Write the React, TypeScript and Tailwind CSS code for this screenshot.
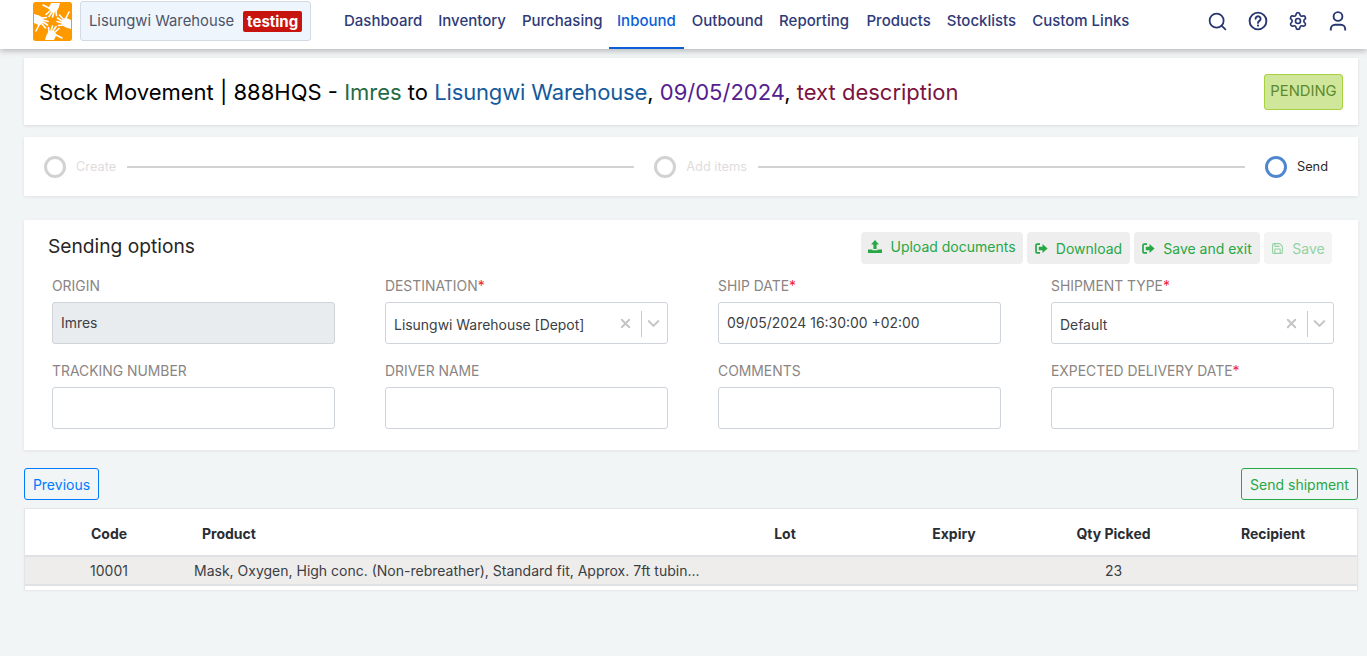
import React from "react";
import { Search, Settings, Save, X, ChevronDown } from "lucide-react";

const navItems = ["Dashboard", "Inventory", "Purchasing", "Inbound", "Outbound", "Reporting", "Products", "Stocklists", "Custom Links"];
const tableCols = "grid grid-cols-[168px_503px_178px_160px_159px_160px]";

function navClass(n: string) {
  if (n === "Inbound") return "text-[#0b5ed7] border-b-2 border-[#0b5ed7] -ml-[1.5px]";
  if (n === "Products") return "text-[#2f3a78] ml-[1.5px]";
  return "text-[#2f3a78]";
}

function Logo() {
  const hand = (
    <g>
      <path d="M18 1h9l-1.500 5-2 3.500-5 1-3-4z" fill="#fff" />
      <g stroke="#fff" strokeWidth="1.6" strokeLinecap="round" fill="none">
        <path d="M17 6.500l-7-3.500" />
        <path d="M17 9l-4 3.500" />
        <path d="M19 10l-3 4.500" />
        <path d="M21 10l-1.500 5" />
        <path d="M23 9l.5 4.500" />
      </g>
    </g>
  );
  return (
    <svg width="39" height="39" viewBox="0 0 39 39" className="rounded-[2px]">
      <rect width="39" height="39" rx="2" fill="#ff9900" />
      {hand}
      <g transform="rotate(90 19.5 19.5)">{hand}</g>
      <g transform="rotate(180 19.5 19.5)">{hand}</g>
      <g transform="rotate(270 19.5 19.5)">{hand}</g>
    </svg>
  );
}

function Arrow() {
  return (
    <svg width="13" height="11" viewBox="0 0 13 11" fill="none" className="shrink-0">
      <path d="M5 1.2H2a1 1 0 0 0-1 1v6.600a1 1 0 0 0 1 1h3" stroke="currentColor" strokeWidth="1.7" />
      <path d="M3.800 3.800H7.500V1L12.600 5.500 7.500 10V7.200H3.800z" fill="currentColor" />
    </svg>
  );
}

function UploadSolid() {
  return (
    <svg width="14" height="13" viewBox="0 0 14 13" className="shrink-0">
      <path d="M7 0l4 4.400H8.600V9H5.400V4.400H3z" fill="currentColor" />
      <path d="M0 9.500h4.400v.7h5.200v-.7H14V13H0z" fill="currentColor" />
    </svg>
  );
}

function HelpIcon() {
  return (
    <svg width="20" height="20" viewBox="0 0 20 20" fill="none" stroke="currentColor" strokeWidth="1.9">
      <circle cx="10" cy="10" r="8.400" />
      <path d="M7.600 7.800a2.500 2.500 0 1 1 3.800 2.100c-.9.6-1.400 1-1.400 2" strokeLinecap="round" />
      <circle cx="10" cy="14.600" r="1.100" fill="currentColor" stroke="none" />
    </svg>
  );
}

function UserIcon() {
  return (
    <svg width="20" height="20" viewBox="0 0 20 20" fill="none" stroke="currentColor" strokeWidth="1.9">
      <circle cx="10" cy="5.500" r="4.400" />
      <path d="M2.800 19.500v-1.500a4.300 4.300 0 0 1 4.300-4.300h5.800a4.300 4.300 0 0 1 4.300 4.300v1.500" />
    </svg>
  );
}

function Label({ text, req }: { text: string; req?: boolean }) {
  return (
    <div className="h-[20px] text-[13.9px] leading-[20px] text-[#8a8583] uppercase">
      {text}
      {req && <span className="text-[#f01f3e]">*</span>}
    </div>
  );
}

function Field({ label, req, value, disabled, select }: { label: string; req?: boolean; value?: string; disabled?: boolean; select?: boolean }) {
  return (
    <div className="w-[283px]">
      <Label text={label} req={req} />
      <div className={`mt-[6px] h-[42px] rounded-[3px] border border-[#ced4da] flex items-center text-[13.95px] text-[#3b3f46] pl-[8px] ${disabled ? "bg-[#e9ecef]" : "bg-white"}`}>
        <span className={`flex-1 ${select ? "pt-[4px]" : ""}`}>{value}</span>
        {select && (
          <div className="flex items-center text-[#c4c4c4] pt-[1px]">
            <X size={15} strokeWidth={3} className="mr-[8px]" />
            <div className="w-px h-[26px] bg-[#ccc]" />
            <ChevronDown size={19} strokeWidth={2.6} className="ml-[2px] mr-[4px]" />
          </div>
        )}
      </div>
    </div>
  );
}

function Step({ label, active }: { label: string; active?: boolean }) {
  return (
    <div className="flex items-center shrink-0">
      <div className={`w-[22px] h-[22px] rounded-full border-[3px] ${active ? "border-[#4f87cf]" : "border-[#d2d2d2]"}`} />
      <span className={`ml-[10px] text-[12.8px] ${active ? "text-[#2a2a2a]" : "text-[#e0dcdc]"}`}>{label}</span>
    </div>
  );
}

export default function App() {
  return (
    <div className="min-h-[656px] bg-[#f1f5f6] font-['Inter',sans-serif] overflow-hidden">
      <header className="h-[49px] bg-white flex shadow-[0_2px_6px_rgba(0,0,0,0.25)] relative pl-[33px]">
        <div className="mt-[2px]"><Logo /></div>
        <div className="ml-[8px] mt-[1px] h-[40px] w-[231px] bg-[#eff5fd] border border-[#d3d9e5] rounded-[3px] flex items-center pl-[8px]">
          <span className="text-[14.8px] text-[#4d5668]">Lisungwi Warehouse</span>
          <span className="ml-[9px] bg-[#c8140f] text-white font-bold text-[15px] leading-[21px] px-[4px] rounded-[2px]">testing</span>
        </div>
        <nav className="ml-[25px] flex">
          {navItems.map((n) => (
            <a key={n} className={`px-[8px] h-[49px] leading-[41px] text-[15px] font-medium ${navClass(n)}`}>{n}</a>
          ))}
        </nav>
        <div className="ml-auto mr-[19px] flex items-start gap-[20px] pt-[11px] text-[#283672]">
          <Search size={21} strokeWidth={2} />
          <HelpIcon />
          <Settings size={20} strokeWidth={2} />
          <UserIcon />
        </div>
      </header>

      <main className="pl-[24px] pr-[9px]">
        <section className="mt-[9px] h-[67px] bg-white shadow-[0_1px_3px_rgba(0,0,0,0.1)] flex items-center justify-between px-[15px]">
          <h1 className="text-[22px] text-black font-normal pt-[2px]">
            Stock Movement | 888HQS - <span className="text-[#1f6b46]">Imres</span> to <span className="text-[#155a9c] tracking-[-0.15px]">Lisungwi Warehouse</span>, <span className="text-[#53218f]">09/05/2024</span>, <span className="text-[#7b1440]">text description</span>
          </h1>
          <div className="h-[36px] w-[79px] bg-[#cfe69b] border border-[#a6d23f] rounded-[3px] text-[#5f8a2c] text-[14.8px] flex items-center justify-center">PENDING</div>
        </section>

        <section className="mt-[12px] h-[59px] bg-white shadow-[0_1px_3px_rgba(0,0,0,0.08)] flex items-center pl-[20px] pr-[30px]">
          <Step label="Create" />
          <div className="w-[507px] shrink-0 h-[2px] bg-[#d2d2d2] ml-[11px] mr-[20px]" />
          <Step label="Add items" />
          <div className="flex-1 h-[2px] bg-[#d2d2d2] ml-[11px] mr-[20px]" />
          <Step label="Send" active />
        </section>

        <section className="mt-[24px] h-[230px] bg-white shadow-[0_1px_3px_rgba(0,0,0,0.08)] pl-[28px] pr-[26px]">
          <div className="flex justify-between h-[56px]">
            <h2 className="-ml-[4px] mt-[14px] text-[19.2px] leading-[24px] text-[#262626] font-normal">Sending options</h2>
            <div className="flex gap-[4px] mt-[12px] text-[14px] text-[#28a745]">
              <button className="h-[32px] w-[162px] bg-[#eeeeee] rounded-[4px] flex items-center justify-center gap-[8px] pb-[4px]"><UploadSolid />Upload documents</button>
              <button className="h-[32px] w-[103px] bg-[#eeeeee] rounded-[4px] flex items-center justify-center gap-[8px]"><Arrow />Download</button>
              <button className="h-[32px] w-[126px] bg-[#eeeeee] rounded-[4px] flex items-center justify-center gap-[8px]"><Arrow />Save and exit</button>
              <button className="h-[32px] w-[68px] bg-[#f4f4f4] rounded-[4px] flex items-center justify-center gap-[8px] text-[#93d2a2]"><Save size={13} />Save</button>
            </div>
          </div>
          <div className="grid grid-cols-[283px_283px_283px_283px] gap-x-[50px] gap-y-[17px]">
            <Field label="Origin" value="Imres" disabled />
            <Field label="Destination" req value="Lisungwi Warehouse [Depot]" select />
            <Field label="Ship date" req value="09/05/2024 16:30:00 +02:00" />
            <Field label="Shipment type" req value="Default" select />
            <Field label="Tracking number" />
            <Field label="Driver name" />
            <Field label="Comments" />
            <Field label="Expected delivery date" req />
          </div>
        </section>

        <div className="mt-[18px] flex justify-between text-[14px]">
          <button className="h-[32px] w-[75px] border border-[#007bff] rounded-[3px] text-[#007bff]">Previous</button>
          <button className="h-[32px] w-[117px] border border-[#28a745] rounded-[3px] text-[#28a745]">Send shipment</button>
        </div>

        <section className="mt-[8px] h-[82px] bg-white border border-[#e3e5e8] border-b-0 shadow-[0_1px_2px_rgba(0,0,0,0.06)]">
          <div className={`${tableCols} h-[48px] items-center pt-[3px] text-[14px] font-bold text-[#2a2d33] border-b-[2px] border-[#dfe1e5]`}>
            <div className="text-center">Code</div>
            <div className="pl-[9px]">Product</div>
            <div className="text-center">Lot</div>
            <div className="text-center">Expiry</div>
            <div className="text-center">Qty Picked</div>
            <div className="text-center">Recipient</div>
          </div>
          <div className={`${tableCols} h-[29px] items-center text-[14px] text-[#3b3e44] bg-[#eeedeb] border-b-[2px] border-[#dfe1e5]`}>
            <div className="text-center">10001</div>
            <div className="whitespace-nowrap pl-[1px]">Mask, Oxygen, High conc. (Non-rebreather), Standard fit, Approx. 7ft tubin...</div>
            <div />
            <div />
            <div className="text-center">23</div>
            <div />
          </div>
        </section>
      </main>
    </div>
  );
}
